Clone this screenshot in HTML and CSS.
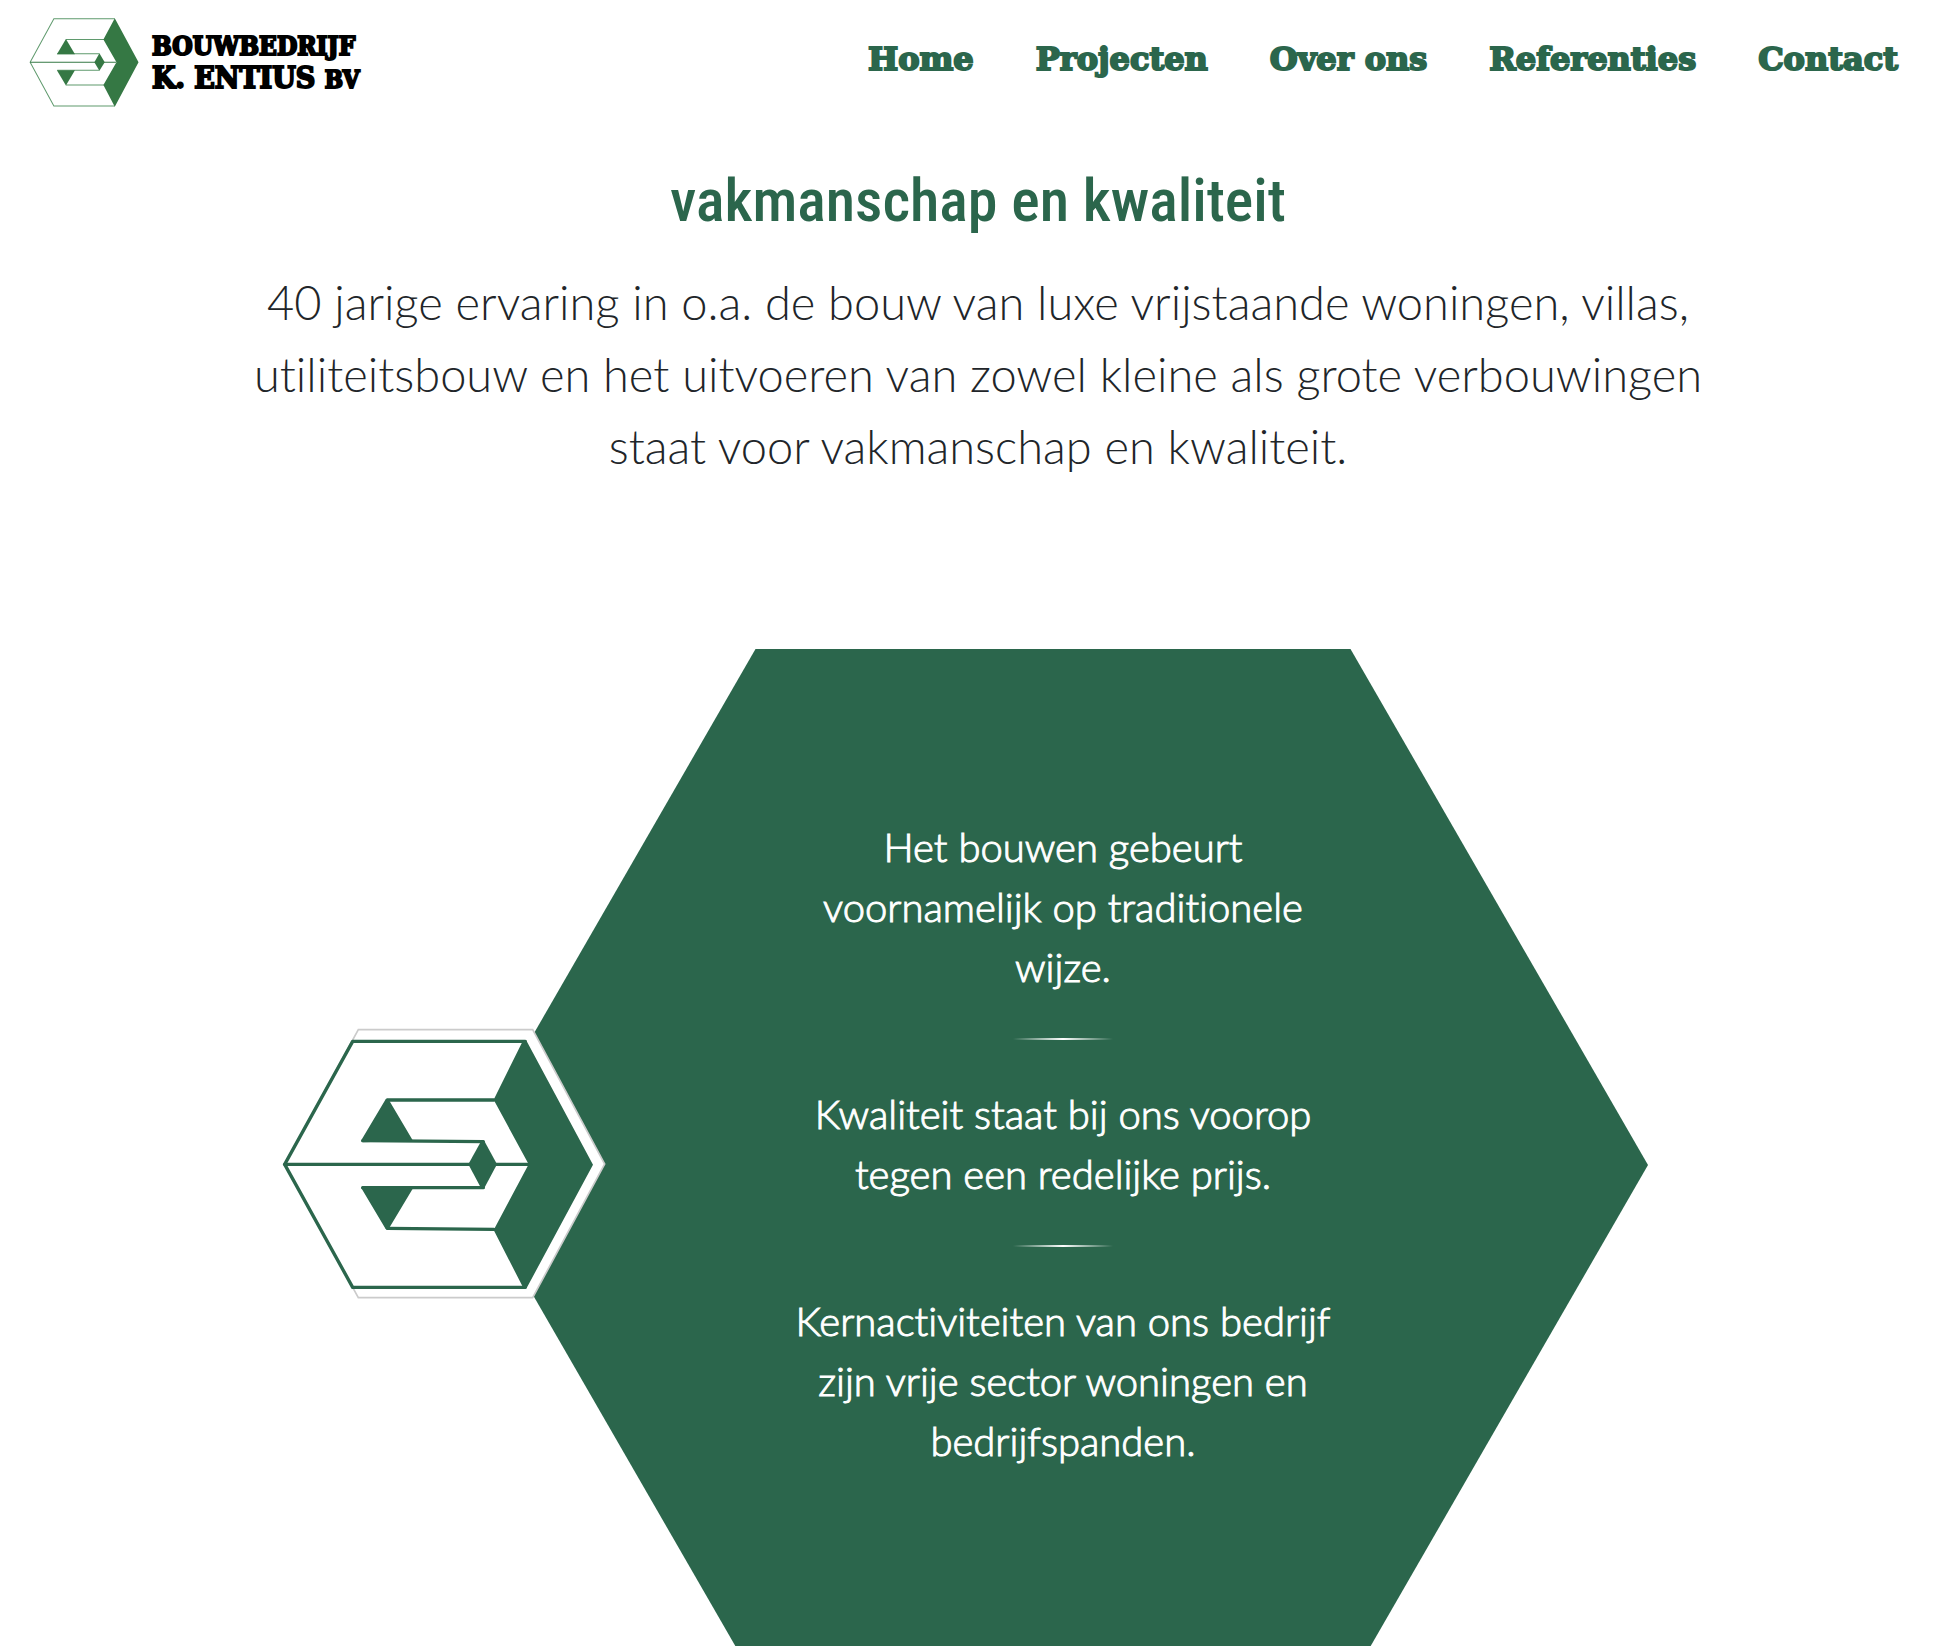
FILE: index.html
```html
<!DOCTYPE html>
<html lang="nl">
<head>
<meta charset="utf-8">
<meta name="viewport" content="width=device-width, initial-scale=1">
<title>Bouwbedrijf K. Entius BV</title>
<link rel="stylesheet" href="styles.css">
</head>
<body>
<header class="site-header">
  <a class="brand" href="#">
    <svg class="brand-mark" viewBox="28 26 328 266" aria-hidden="true">
      <g fill="none" stroke="#5f9a6d" stroke-width="3">
        <path d="M284 28H102L31 158L102 289H284"/>
        <path d="M138 90H252M138 226H252M112 133H238M112 182H238"/>
      </g>
      <path d="M31 158H288" stroke="#357844" stroke-width="3"/>
      <g fill="#357844">
        <path d="M284 27L355 158L284 291L250 226L289 158L250 90Z"/>
        <path d="M138 89L165 134H111Z"/>
        <path d="M138 228L165 182H111Z"/>
        <path d="M238 131L254 158L238 184L223 158Z"/>
      </g>
    </svg>
    <span class="brand-name">
      <span class="brand-line">BOUWBEDRIJF</span>
      <span class="brand-line brand-line-large">K. ENTIUS <span class="brand-suffix">BV</span></span>
    </span>
  </a>
  <nav class="site-nav">
    <a href="#">Home</a>
    <a href="#">Projecten</a>
    <a href="#">Over ons</a>
    <a href="#">Referenties</a>
    <a href="#">Contact</a>
  </nav>
</header>
<main>
  <section class="intro">
    <h1>vakmanschap en kwaliteit</h1>
    <p>40 jarige ervaring in o.a. de bouw van luxe vrijstaande woningen, villas, utiliteitsbouw en het uitvoeren van zowel kleine als grote verbouwingen staat voor vakmanschap en kwaliteit.</p>
  </section>
  <section class="feature">
    <div class="stage">
      <div class="hexagon">
        <p>Het bouwen gebeurt voornamelijk op traditionele wijze.</p>
        <hr>
        <p>Kwaliteit staat bij ons voorop tegen een redelijke prijs.</p>
        <hr>
        <p>Kernactiviteiten van ons bedrijf zijn vrije sector woningen en bedrijfspanden.</p>
      </div>
      <svg class="badge" viewBox="36 54 972 813" aria-hidden="true">
        <path d="M265 59H788L1004 462L788 863H265L44 463Z" fill="#fff" stroke="#cbcbcb" stroke-width="5"/>
        <path d="M248 94H766L968 463L766 832H248L44 463Z" fill="#fff"/>
        <g fill="none" stroke="#2b664c" stroke-width="10" stroke-linejoin="round" stroke-linecap="round">
          <path d="M766 94H248L44 463L248 832H766"/>
          <path d="M44 463H775"/>
          <path d="M352 270H672M278 392L640 395M278 533H640M352 655L672 658"/>
        </g>
        <g fill="#2b664c">
          <path d="M758 94Q766 86 771 95L969 464L770 834Q764 841 757 828L671 660L776 463L671 269Z"/>
          <path d="M347 268Q353 263 358 272L429 392L278 397Q272 393 276 387Z"/>
          <path d="M347 657Q353 662 358 653L429 535L278 529Q272 531 276 538Z"/>
          <path d="M632 396Q638 387 643 393L681 463L643 534Q638 540 631 530L595 463Z"/>
        </g>
      </svg>
    </div>
  </section>
</main>
</body>
</html>
```
FILE: styles.css
```css
:root {
  --green: #2b664c;
  --ink: #212529;
}

* {
  box-sizing: border-box;
}

body {
  margin: 0;
  background: #fff;
  color: var(--ink);
  font-family: Lato, "Noto Sans", sans-serif;
  font-weight: 300;
  font-variant-ligatures: none;
}

a {
  color: inherit;
  text-decoration: none;
}

.site-header {
  display: flex;
  justify-content: space-between;
  align-items: center;
  padding: 18px 50px 18px 29px;
}

.brand {
  display: flex;
  align-items: center;
  gap: 13px;
  color: #000;
  font-family: "DejaVu Serif Condensed", "DejaVu Serif", serif;
  font-weight: 700;
  -webkit-text-stroke: 2px #000;
}

.brand-mark {
  width: 110px;
  height: 89px;
}

.brand-line {
  display: block;
  font-size: 26px;
  line-height: 32px;
  white-space: nowrap;
}

.brand-line-large {
  font-size: 30px;
}

.brand-suffix {
  font-size: 24px;
}

.site-nav {
  display: flex;
  flex-wrap: wrap;
  gap: 62px;
  padding-bottom: 8px;
  color: var(--green);
  font: 700 32px/40px "DejaVu Serif", serif;
  -webkit-text-stroke: 2px var(--green);
}

.intro {
  padding: 34px 0 0 8px;
  text-align: center;
}

.intro h1 {
  margin: 0;
  color: var(--green);
  font: 500 60px/84px "Roboto Condensed", Roboto, sans-serif;
}

.intro p {
  max-width: 1500px;
  margin: 23px auto 0;
  font-size: 47px;
  line-height: 72px;
}

.feature {
  padding: 167px 18px 0 0;
}

.stage {
  position: relative;
  max-width: 1366px;
  margin: 0 auto;
  padding-left: 176px;
}

.hexagon {
  min-height: 1032px;
  padding: 168px 310px 168px 330px;
  background: var(--green);
  clip-path: polygon(25% 0, 75% 0, 100% 50%, 75% 100%, 25% 100%, 0 50%);
  color: #fff;
  font-size: 40px;
  line-height: 60px;
  text-align: center;
  -webkit-text-stroke: 1px #fff;
}

.hexagon p {
  margin: 0;
}

.hexagon hr {
  width: 100px;
  height: 2px;
  margin: 41px auto 44px;
  border: 0;
  background: linear-gradient(to right, transparent, #fff, transparent);
}

.badge {
  position: absolute;
  top: 379px;
  left: 0;
  width: 324px;
  height: 271px;
}
```
